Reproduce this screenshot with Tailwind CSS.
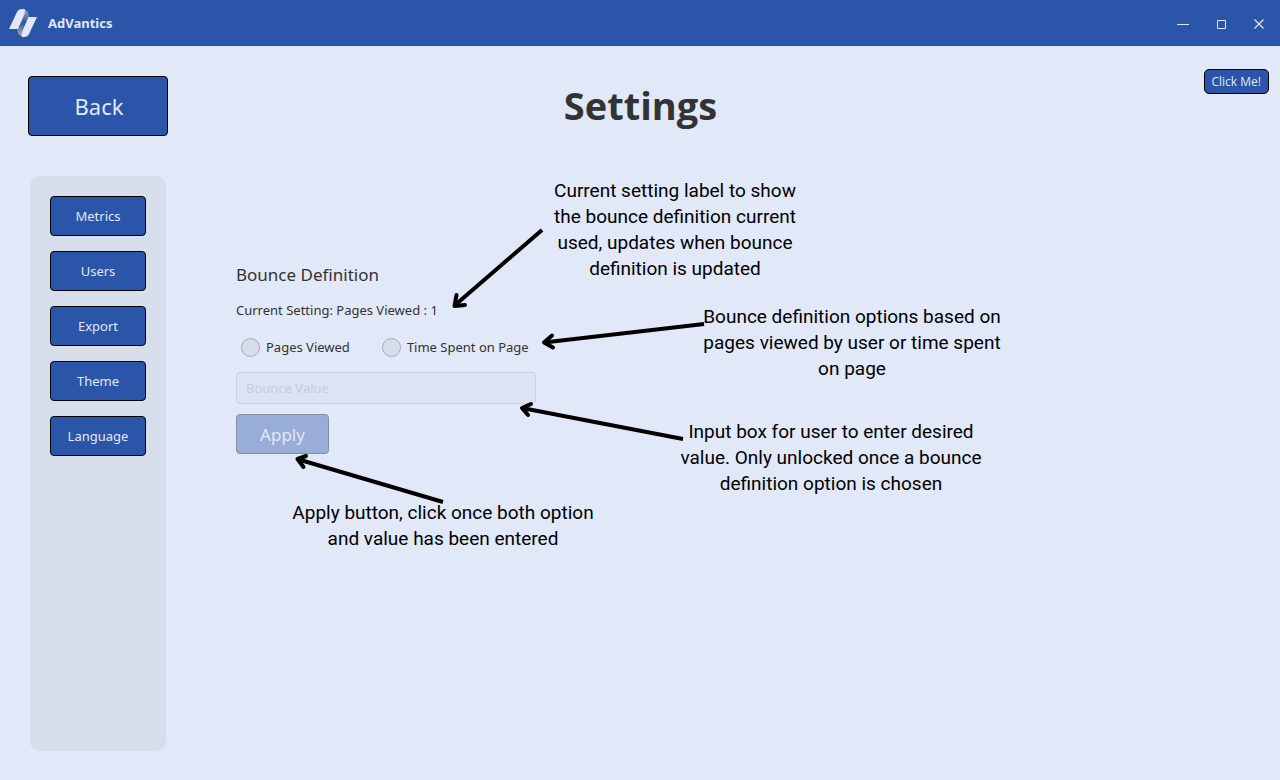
<!DOCTYPE html>
<html lang="en">
<head>
<meta charset="utf-8">
<meta name="viewport" content="width=device-width, initial-scale=1">
<title>AdVantics</title>
<script src="https://cdn.jsdelivr.net/npm/@tailwindcss/browser@4"></script>
</head>
<body class="relative flex min-h-screen flex-col bg-[#e1e8f7] font-['Noto_Sans','Open_Sans',sans-serif] text-[#333333]">
  <header class="flex h-[46px] items-center bg-[#2a55a9] pl-2 text-[#e1e8f7]">
    <svg class="size-8" viewBox="0 0 32 32" aria-hidden="true">
      <defs>
        <linearGradient id="fold" x1="0" y1="0" x2="0" y2="1">
          <stop offset="0" stop-color="#a3aec6"/>
          <stop offset=".25" stop-color="#6e7f9f"/>
          <stop offset=".46" stop-color="#3d5f9f"/>
          <stop offset=".5" stop-color="#2a55a9"/>
          <stop offset=".56" stop-color="#3d5f9f"/>
          <stop offset=".75" stop-color="#7487aa"/>
          <stop offset="1" stop-color="#aeb9d0"/>
        </linearGradient>
      </defs>
      <path d="M15 2Q20.500 3 21 10L21 18L15 29.500Q9.500 28 9 22L9 21Z" fill="url(#fold)"/>
      <path d="M1 22L9 5Q10.500 2 14 2Q16 2 17 2.500L16.500 7L10 22Z" fill="#e1e8f7"/>
      <path d="M29 10L21 27Q19.500 30 16 30Q14 30 13.500 29.500L14.500 24L20.500 10Z" fill="#e1e8f7"/>
    </svg>
    <span class="ml-2 pt-px text-[13px] font-bold">AdVantics</span>
    <div class="ml-auto flex h-full pr-[2px]">
      <button type="button" aria-label="Minimize" class="flex w-[38px] items-center justify-center"><svg class="size-3" viewBox="0 0 12 12" fill="none" stroke="currentColor"><path d="M0 7.500H12"/></svg></button>
      <button type="button" aria-label="Maximize" class="flex w-[38px] items-center justify-center"><svg class="size-3" viewBox="0 0 12 12" fill="none" stroke="currentColor"><path d="M2.500 3.500H10.500V11.500H2.500Z"/></svg></button>
      <button type="button" aria-label="Close" class="flex w-[38px] items-center justify-center"><svg class="size-3" viewBox="0 0 12 12" fill="none" stroke="currentColor" stroke-width="1.200"><path d="M1.500 2.500L10.500 11.500M10.500 2.500L1.500 11.500"/></svg></button>
    </div>
  </header>

  <div class="grid grid-cols-[1fr_auto_1fr] items-start pt-[23px] pr-[11px] pl-7">
    <button type="button" class="mt-[7px] h-15 w-35 rounded border border-black bg-[#2a55a9] pt-px pl-[2px] text-[22px] text-[#e1e8f7]">Back</button>
    <h1 class="mt-[10px] -ml-4 font-['Open_Sans',sans-serif] text-[38px] leading-[52px] font-bold">Settings</h1>
    <button type="button" class="h-[25px] justify-self-end rounded-[5px] border border-black bg-[#2a55a9] px-[7px] font-['Open_Sans',sans-serif] text-[12px] text-[#e1e8f7]">Click Me!</button>
  </div>

  <main class="flex flex-1 gap-[70px] pt-10 pb-[29px] pl-[30px]">
    <nav aria-label="Settings sections" class="flex w-[136px] flex-col gap-[15px] rounded-[10px] bg-[#d6ddeb] p-5">
      <button type="button" class="h-10 rounded border border-black bg-[#2a55a9] pt-px text-[13px] text-[#e1e8f7]">Metrics</button>
      <button type="button" class="h-10 rounded border border-black bg-[#2a55a9] pt-px text-[13px] text-[#e1e8f7]">Users</button>
      <button type="button" class="h-10 rounded border border-black bg-[#2a55a9] pt-px text-[13px] text-[#e1e8f7]">Export</button>
      <button type="button" class="h-10 rounded border border-black bg-[#2a55a9] pt-px text-[13px] text-[#e1e8f7]">Theme</button>
      <button type="button" class="h-10 rounded border border-black bg-[#2a55a9] pt-px text-[13px] text-[#e1e8f7]">Language</button>
    </nav>

    <form class="flex flex-col items-start pt-[87px]">
      <h2 class="text-[17px] leading-6">Bounce Definition</h2>
      <p class="mt-[13px] text-[13px] leading-5">Current Setting: Pages Viewed : 1</p>
      <div class="mt-[17px] flex gap-8 pl-[5px] text-[13px] leading-5">
        <label class="flex items-center gap-[6px]"><input type="radio" name="bounce" class="size-[19px] appearance-none rounded-full border border-[#a4aab9] bg-[#d6ddeb] checked:border-4 checked:bg-[#2a55a9]">Pages Viewed</label>
        <label class="flex items-center gap-[6px]"><input type="radio" name="bounce" class="size-[19px] appearance-none rounded-full border border-[#a4aab9] bg-[#d6ddeb] checked:border-4 checked:bg-[#2a55a9]">Time Spent on Page</label>
      </div>
      <input type="text" disabled aria-label="Bounce Value" placeholder="Bounce Value" class="mt-[15px] h-8 w-[300px] rounded border border-[#c8cfde] bg-[#dce3f2] px-[9px] text-[13px] placeholder:text-[#c5ccdc]">
      <button type="submit" disabled class="mt-[10px] h-10 w-[93px] rounded border border-[#878e9d] bg-[#99add9] pt-px text-[17px] text-[#e1e8f7]">Apply</button>
    </form>
  </main>

  <!-- Help callouts laid over the page -->
  <div class="pointer-events-none absolute inset-0 text-center font-['Roboto',sans-serif] text-[19px] leading-[26px] text-black">
    <svg class="absolute top-0 left-0 h-[780px] w-[1280px]" viewBox="0 0 1280 780" fill="none" stroke="#000" stroke-width="4" stroke-linejoin="round" aria-hidden="true">
      <path d="M542 230L454 306"/>
      <path d="M456.500 295L454.500 306L465 305" stroke-linecap="round"/>
      <path d="M704 324L544 342.500"/>
      <path d="M552 335.500L544 342.500L553 347.500" stroke-linecap="round"/>
      <path d="M683 439L522 408"/>
      <path d="M531 404L522 408L528 415" stroke-linecap="round"/>
      <path d="M443 502L297 459"/>
      <path d="M306 456L297.500 459L303.500 467" stroke-linecap="round"/>
    </svg>
    <p class="absolute top-[178px] left-[545px] w-[260px]">Current setting label to show<br>the bounce definition current<br>used, updates when bounce<br>definition is updated</p>
    <p class="absolute top-[304px] left-[692px] w-[320px]">Bounce definition options based on<br>pages viewed by user or time spent<br>on page</p>
    <p class="absolute top-[419px] left-[671px] w-[320px]">Input box for user to enter desired<br>value. Only unlocked once a bounce<br>definition option is chosen</p>
    <p class="absolute top-[500px] left-[283px] w-[320px]">Apply button, click once both option<br>and value has been entered</p>
  </div>
</body>
</html>
